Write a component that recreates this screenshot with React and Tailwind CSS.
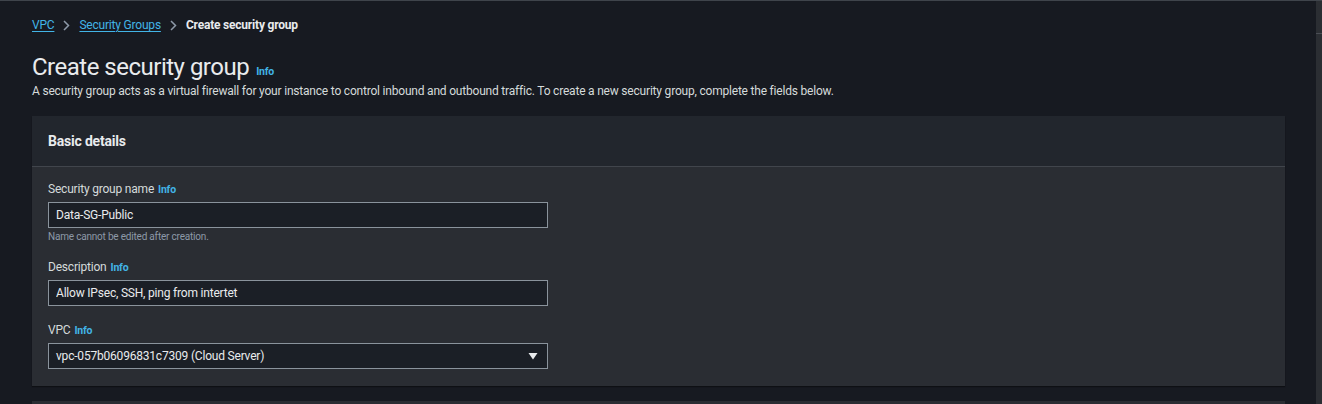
import { useState } from "react";

const Info = () => <span className="text-[10.5px] font-bold text-[#42b4e6] ml-1">Info</span>;

const Field = ({ label, children, hint }) => (
  <div className="flex flex-col">
    <div className="text-[12px] leading-[16px] text-[#d5dbdb] h-[16px]">
      {label}
      <Info />
    </div>
    <div className="mt-[5px]">{children}</div>
    {hint && <div className="text-[10px] leading-[13px] text-[#8d99a8] mt-[2px]">{hint}</div>}
  </div>
);

const App = () => {
  const [name, setName] = useState("Data-SG-Public");
  const [desc, setDesc] = useState("Allow IPsec, SSH, ping from intertet");

  return (
    <div
      className="w-[1322px] h-[404px] overflow-hidden bg-[#171a21] border-t border-[#3f444b] flex tracking-[-0.2px]"
      style={{ fontFamily: "Roboto, 'Open Sans', sans-serif" }}
    >
      <div className="flex-1 pl-[32px] pr-[31px]">
        {/* breadcrumbs */}
        <div className="flex items-center h-[16px] mt-[16px] text-[12px] leading-[16px]">
          <a className="text-[#42b4e6] underline underline-offset-2">VPC</a>
          <svg className="mx-[9px]" width="7" height="11" viewBox="0 0 7 11" fill="none">
            <path d="M1 1l4.5 4.5L1 10" stroke="#8d99a8" strokeWidth="1.5" />
          </svg>
          <a className="text-[#42b4e6] underline underline-offset-2">Security Groups</a>
          <svg className="mx-[9px]" width="7" height="11" viewBox="0 0 7 11" fill="none">
            <path d="M1 1l4.5 4.5L1 10" stroke="#8d99a8" strokeWidth="1.5" />
          </svg>
          <span className="font-bold text-[#e9ebed]">Create security group</span>
        </div>

        {/* title */}
        <div className="flex items-baseline mt-[19px] h-[30px]">
          <h1 className="text-[24px] leading-[30px] text-[#e9ebed] tracking-[-0.5px]">Create security group</h1>
          <span className="ml-[7px] text-[10.5px] font-bold text-[#42b4e6]">Info</span>
        </div>
        <p className="text-[12px] leading-[16px] text-[#d5dbdb] mt-[1px]">
          A security group acts as a virtual firewall for your instance to control inbound and outbound traffic. To
          create a new security group, complete the fields below.
        </p>

        {/* card */}
        <div className="mt-[17px] bg-[#2a2d33] shadow-[0_1px_1px_#0e1014]">
          <div className="bg-[#22262d] h-[51px] border-b border-[#41454c] px-[16px] flex items-center">
            <h2 className="text-[14px] font-bold text-[#e9ebed]">Basic details</h2>
          </div>
          <div className="px-[16px] pt-[14px] pb-[17px] flex flex-col gap-[16px]">
            <Field label="Security group name" hint="Name cannot be edited after creation.">
              <input
                value={name}
                onChange={(e) => setName(e.target.value)}
                className="w-[500px] h-[26px] bg-[#1b1f26] border border-[#8a939c] px-[7px] text-[12px] text-[#e9ebed] outline-none"
              />
            </Field>
            <Field label="Description">
              <input
                value={desc}
                onChange={(e) => setDesc(e.target.value)}
                className="w-[500px] h-[26px] bg-[#1b1f26] border border-[#8a939c] px-[7px] text-[12px] text-[#e9ebed] outline-none"
              />
            </Field>
            <Field label="VPC">
              <div className="w-[500px] h-[26px] bg-[#1b1f26] border border-[#8a939c] px-[7px] flex items-center justify-between text-[12px] text-[#e9ebed]">
                <span>vpc-057b06096831c7309 (Cloud Server)</span>
                <svg width="10" height="8" viewBox="0 0 10 8" className="mr-[2px]">
                  <path d="M0.5 1h9L5 7.5z" fill="#e9ebed" />
                </svg>
              </div>
            </Field>
          </div>
        </div>

        <div className="mt-[15px] h-[20px] bg-[#2a2d33]" />
      </div>

      {/* scrollbar */}
      <div className="w-[6px] bg-[#2b2e33] flex flex-col">
        <div className="h-[32px]" />
        <div className="h-px bg-[#4a4e55]" />
      </div>
    </div>
  );
};

export default App;
